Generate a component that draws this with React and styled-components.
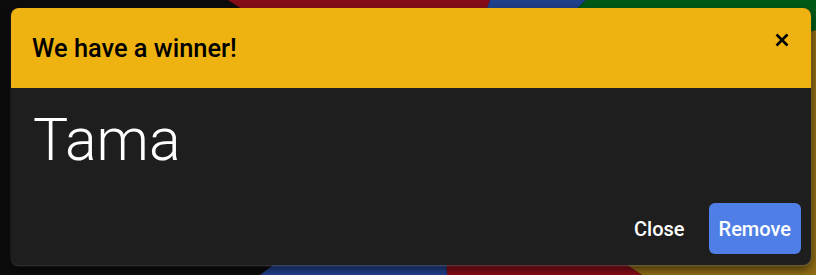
import React from "react";
import styled, { createGlobalStyle } from "styled-components";

const GlobalStyle = createGlobalStyle`
  html, body {
    margin: 0;
    padding: 0;
    background: #0c0c0c;
    font-family: Roboto, "Liberation Sans", sans-serif;
  }
`;

const Page = styled.div`
  position: relative;
  width: 816px;
  height: 275px;
  overflow: hidden;
  padding: 8px 5px 0 11px;
  box-sizing: border-box;
`;

const Wheel = styled.svg`
  position: absolute;
  inset: 0;
  z-index: 0;
`;

const Dialog = styled.div`
  position: relative;
  z-index: 1;
  width: 800px;
  height: 257px;
  display: flex;
  flex-direction: column;
  background: #1e1e1e;
  border-radius: 8px;
  overflow: hidden;
  box-shadow: 0 1px 2px rgba(255, 255, 255, 0.22), 0 4px 10px rgba(0, 0, 0, 0.6);
`;

const Header = styled.div`
  height: 80px;
  flex: none;
  display: flex;
  align-items: center;
  justify-content: space-between;
  padding: 0 22px 0 21px;
  background: #efb311;
`;

const Title = styled.h2`
  margin: 0;
  font-size: 25.4px;
  font-weight: 500;
  color: #000;
`;

const CloseIcon = styled.button`
  display: flex;
  align-self: flex-start;
  margin-top: 25px;
  border: none;
  background: none;
  padding: 0;
  cursor: pointer;
`;

const Body = styled.div`
  flex: 1;
  padding: 22px 22px 0;
`;

const Winner = styled.div`
  font-family: "Roboto", sans-serif;
  font-weight: 300;
  font-size: 59px;
  line-height: 1;
  color: #fff;
`;

const Footer = styled.div`
  display: flex;
  justify-content: flex-end;
  align-items: center;
  gap: 8px;
  padding: 0 10px 11px;
`;

const Button = styled.button`
  height: 51px;
  padding: 0 ${(p) => (p.$primary ? "10px" : "16px")};
  border: none;
  border-radius: 6px;
  background: ${(p) => (p.$primary ? "#4f7fe6" : "transparent")};
  color: #fff;
  font-family: Roboto, "Liberation Sans", sans-serif;
  font-weight: 500;
  font-size: 20px;
  cursor: pointer;
`;

const App = () => {
  return (
    <>
      <GlobalStyle />
      <Page>
        <Wheel width="816" height="275" viewBox="0 0 816 275">
          <polygon points="228,0 490,0 440,140" fill="#850c18" />
          <polygon points="490,0 586,0 440,140" fill="#21408c" />
          <polygon points="586,0 816,0 816,30 440,140" fill="#005a17" />
          <polygon points="816,30 816,275 642,275 440,140" fill="#8f6c14" />
          <polygon points="642,275 447,275 440,140" fill="#850c18" />
          <polygon points="447,275 260,275 440,140" fill="#21408c" />
        </Wheel>
        <Dialog>
          <Header>
            <Title>We have a winner!</Title>
            <CloseIcon aria-label="close">
              <svg width="14" height="14" viewBox="0 0 14 14">
                <path d="M1.5 1.5 L12.5 12.5 M12.5 1.5 L1.5 12.5" stroke="#000" strokeWidth="2.6" />
              </svg>
            </CloseIcon>
          </Header>
          <Body>
            <Winner>Tama</Winner>
          </Body>
          <Footer>
            <Button>Close</Button>
            <Button $primary>Remove</Button>
          </Footer>
        </Dialog>
      </Page>
    </>
  );
};

export default App;
